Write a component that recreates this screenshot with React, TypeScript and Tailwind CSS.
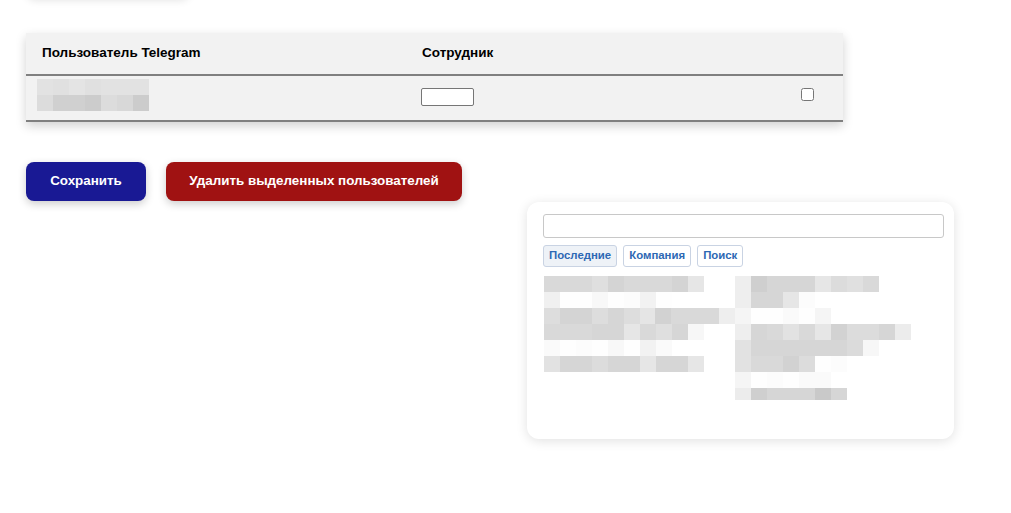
import React from "react";

// pixelated (redacted) text blocks, 16px cells
const leftMosaic: string[][] = [
  ["d9", "d9", "d9", "df", "d4", "d9", "d9", "d9", "d4", "e6"],
  ["f0", "fe", "fe", "f8", "fe", "fc", "f2", "fe"],
  ["dd", "d4", "d4", "dd", "d6", "dd", "e5", "d2", "d9", "d9", "d9", "ee"],
  ["d9", "d9", "d9", "d6", "d6", "e6", "d9", "df", "d6", "f7"],
  ["fa", "fe", "fc", "fe", "f8", "fe", "f2", "fa"],
  ["e2", "d6", "d6", "dc", "d6", "d6", "e6", "d6", "d6", "e6"],
];

const rightMosaic: string[][] = [
  ["ee", "cf", "d6", "d6", "d6", "e6", "dc", "e0", "d9"],
  ["ee", "d6", "d6", "e6", "fc"],
  ["f5", "fe", "fe", "fa", "fe", "f5"],
  ["ee", "d6", "d9", "e2", "d9", "e6", "d2", "dc", "dc", "d6", "ec"],
  ["e2", "d6", "d6", "d6", "d6", "d6", "d6", "db", "f7"],
  ["e2", "d9", "d9", "d2", "dc", "fe", "fc"],
  ["f5", "fe", "fc", "fe", "fa", "fa"],
  ["ec", "cf", "d6", "d6", "d6", "c9", "d6"],
];

const userMosaic: string[][] = [
  ["e2", "e0", "e4", "e0", "e2", "e2", "e2"],
  ["dc", "d0", "d0", "cc", "dc", "d8", "cc"],
];

const Mosaic = ({ rows, lastRowHeight }: { rows: string[][]; lastRowHeight?: number }) => (
  <div className="flex flex-col">
    {rows.map((row, i) => (
      <div key={i} className="flex">
        {row.map((c, j) => (
          <div
            key={j}
            className="w-4"
            style={{
              backgroundColor: `#${c}${c}${c}`,
              height: i === rows.length - 1 && lastRowHeight ? lastRowHeight : 16,
            }}
          />
        ))}
      </div>
    ))}
  </div>
);

const App: React.FC = () => {
  return (
    <div className="w-[1011px] h-[513px] overflow-hidden bg-white font-['Liberation_Sans',Arial,sans-serif] text-black">
      {/* card above, only its shadow is visible */}
      <div className="ml-[27px] w-[162px] h-10 -mt-[42px] bg-white rounded-lg shadow-[0_2px_8px_rgba(0,0,0,0.12)]" />

      {/* Users table */}
      <div className="mt-[35px] ml-[26px] w-[817px] bg-[#f2f2f2] shadow-[0_4px_10px_rgba(0,0,0,0.18)]">
        <div className="flex h-[43px] items-center border-b-2 border-[#808080] text-[13.5px] font-bold">
          <div className="w-[380px] pl-4">Пользователь Telegram</div>
          <div className="w-[366px] pl-4">Сотрудник</div>
          <div className="flex-1" />
        </div>
        <div className="flex h-[46px] items-start border-b-2 border-[#808080]">
          <div className="w-[380px] pl-[11px] pt-[3px]">
            <Mosaic rows={userMosaic} />
          </div>
          <div className="w-[366px] pl-[15px] pt-3">
            <input
              type="text"
              className="block w-[53px] h-[18px] bg-white border border-[#767676] rounded-[2px]"
            />
          </div>
          <div className="flex flex-1 justify-center pt-3">
            <input type="checkbox" className="block w-[13px] h-[13px] m-0" />
          </div>
        </div>
      </div>

      {/* Action buttons */}
      <div className="mt-10 ml-[26px] flex gap-5">
        <button className="h-[39px] w-[120px] rounded-lg bg-[#191994] text-white text-[13.4px] font-bold shadow-[0_3px_8px_rgba(0,0,0,0.2)]">
          Сохранить
        </button>
        <button className="h-[39px] w-[296px] rounded-lg bg-[#a01212] text-white text-[13.4px] font-bold shadow-[0_3px_8px_rgba(0,0,0,0.2)]">
          Удалить выделенных пользователей
        </button>
      </div>

      {/* Picker panel */}
      <div className="mt-px ml-[527px] w-[427px] h-[237px] rounded-xl bg-white shadow-[0_2px_12px_rgba(0,0,0,0.12)] px-4 pt-3">
        <input
          type="text"
          className="block w-[401px] h-6 border border-[#c8c8c8] rounded-[3px] bg-white"
        />
        <div className="mt-[7px] flex gap-[6px] text-[11.4px] font-bold text-[#2d68b4]">
          <button className="h-[22px] px-[5px] rounded-[3px] border border-[#c9d3e3] bg-[#eef2f7]">
            Последние
          </button>
          <button className="h-[22px] px-[5px] rounded-[3px] border border-[#c9d3e3] bg-white">
            Компания
          </button>
          <button className="h-[22px] px-[5px] rounded-[3px] border border-[#c9d3e3] bg-white">
            Поиск
          </button>
        </div>
        <div className="mt-[9px] flex">
          <div className="w-[192px] pl-px">
            <Mosaic rows={leftMosaic} />
          </div>
          <Mosaic rows={rightMosaic} lastRowHeight={12} />
        </div>
      </div>
    </div>
  );
};

export default App;
